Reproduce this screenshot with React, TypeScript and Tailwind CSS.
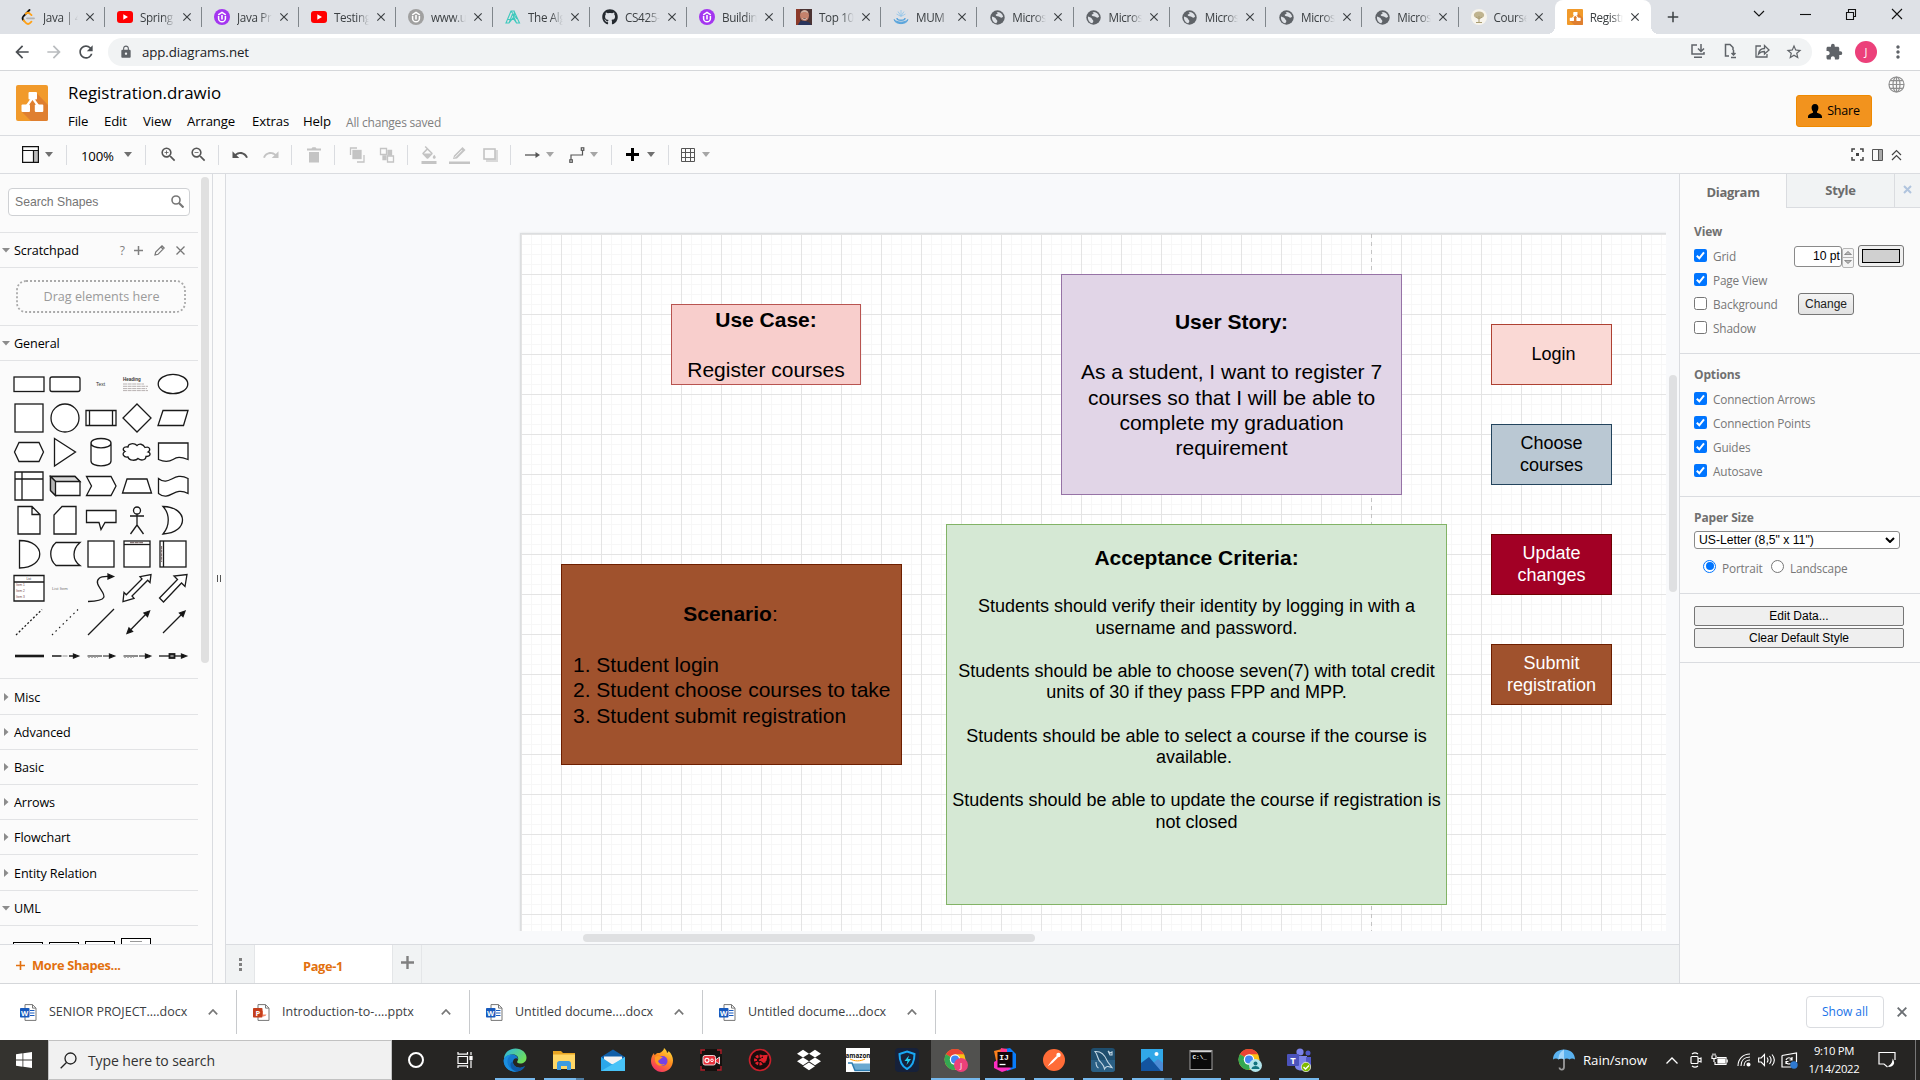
import React from "react";
import {
  MdArrowBack, MdArrowForward, MdRefresh, MdLock, MdClose, MdAdd, MdStarBorder, MdExtension,
  MdMoreVert, MdZoomIn, MdZoomOut, MdUndo, MdRedo, MdFormatColorFill,
} from "react-icons/md";
import { FaGithub, FaDropbox } from "react-icons/fa";

const UI = "font-['Open_Sans','Noto_Sans',sans-serif]";
const ARIAL = "font-['Liberation_Sans',Arial,sans-serif]";

/* ---------- favicons ---------- */

const YouTube = () => (
  <svg width="16" height="12" viewBox="0 0 16 12"><rect width="16" height="12" rx="3" fill="#f00" /><path d="M6.3 3.2v5.6L11 6z" fill="#fff" /></svg>
);
const Upwork = ({ c }: { c: string }) => (
  <svg width="16" height="16" viewBox="0 0 16 16"><circle cx="8" cy="8" r="8" fill={c} />
    <path d="M4.6 7v2.400a3.4 3.400 0 0 0 6.800 0V7M4.200 5.800L8 3.400l3.800 2.400" fill="none" stroke="#fff" strokeWidth="1.500" /><path d="M8 6v4.500" stroke="#fff" strokeWidth="1.600" /></svg>
);
const Leet = () => (
  <svg width="14" height="16" viewBox="0 0 14 16" fill="none" strokeLinecap="round" strokeWidth="1.800"><path d="M8.500 1L2.600 7c-1.300 1.400-1.300 3 0 4.300" stroke="#111" /><path d="M2.600 11.300l2.300 2.600c1.300 1.300 3 1.300 4.300 0l1.200-1.200M4.800 4.800c1.500-1.300 3-1.300 4.300 0l1.400 1.300" stroke="#ffa116" /><path d="M6 9.300h7" stroke="#b3b3b3" /></svg>
);
const Alpha = () => (
  <svg width="16" height="14" viewBox="0 0 16 14" fill="none" stroke="#3ec9bd" strokeWidth="1.100"><path d="M1 13L6 1h3l5.500 12h-3L7.500 4 4 13zM4 13l4-5 3.500 5M6 1l6 8M9 1l1 4M2.500 9.500h6" /></svg>
);
const Face = () => (
  <svg width="16" height="16" viewBox="0 0 16 16"><rect width="16" height="16" fill="#4c3434" /><rect width="4" height="16" fill="#8c3a2a" /><ellipse cx="8.500" cy="6.500" rx="4.500" ry="5.500" fill="#c4826c" /><path d="M4.500 4.500c1-4.500 7.500-4.500 8 0-2-2-6-2-8 0z" fill="#cdb5a8" /><path d="M2 16c1-4 4-5 7-4s5 1 6 4z" fill="#28345c" /><path d="M6.500 9.500c1 1 3 1 4 0" stroke="#fff" strokeWidth=".8" /></svg>
);
const Fountain = () => (
  <svg width="16" height="16" viewBox="0 0 16 16" fill="none" stroke="#5aa5dc" strokeWidth="1"><path d="M8 7V1M8 7L5 2.500M8 7l3-4.500M8 7.500L3.500 5M8 7.500L12.500 5" strokeWidth=".8" stroke="#8fc4ea" /><path d="M4 9c0 3 8 3 8 0" strokeWidth="1.500" /><path d="M1 10.500c1 5.500 13 5.500 14 0-3 3.500-11 3.500-14 0z" fill="#5aa5dc" /></svg>
);
const Tree = () => (
  <svg width="16" height="16" viewBox="0 0 16 16"><circle cx="8" cy="8" r="8" fill="#f7f4ec" /><ellipse cx="8" cy="6" rx="5.200" ry="3.600" fill="#c0b48f" /><path d="M8 7v6M5 8l3 2 3-2M5 13.500h6" stroke="#a99c72" fill="none" /></svg>
);
const DrawioMark = ({ w, h }: { w: number; h: number }) => (
  <svg width={w} height={h} viewBox="0 0 32 36" preserveAspectRatio="none">
    <rect width="32" height="36" rx="2" fill="#f19a2b" />
    <path d="M20.500 8L32 20v14a2 2 0 0 1-2 2H15L6 27l9-11z" fill="#df7f30" />
    <path d="M16.500 13L10 22M16.500 13L23 22" stroke="#fff" strokeWidth="2.200" />
    <rect x="12.500" y="7" width="8.500" height="7.500" rx="1" fill="#fff" /><rect x="5.500" y="19.500" width="8.500" height="7.500" rx="1" fill="#fff" /><rect x="18.800" y="19.500" width="8.500" height="7.500" rx="1" fill="#fff" />
  </svg>
);
const Globe = () => (
  <svg width="15" height="15" viewBox="0 0 15 15"><circle cx="7.500" cy="7.500" r="7.200" fill="#5f6368" /><path d="M2 6.500c2 .5 3.500 1 4 2.500.3 1 1.500 1 1.300 2.500-.1.900-.8 1.200-1.200 1.800C3.500 12.800 1.600 10 2 6.500zM6.500 2c2 1.200 1 2-.5 2.500-.8.300 0 1.500 1.500 1.700 2 .3 2.800 1.500 4 1.500.8 0 1-.7 1.600-1.200C12.500 4 10 1.800 6.500 2z" fill="#dee1e6" /></svg>
);

const tabs: { t: string; i: React.ReactNode }[] = [
  { t: "Java | 4", i: <Leet /> },
  { t: "Spring B", i: <YouTube /> },
  { t: "Java Pr", i: <Upwork c="#a435f0" /> },
  { t: "Testing", i: <YouTube /> },
  { t: "www.ud", i: <Upwork c="#a0a0a0" /> },
  { t: "The Alg", i: <Alpha /> },
  { t: "CS425-", i: <FaGithub className="size-4 text-[#24292f]" /> },
  { t: "Building", i: <Upwork c="#a435f0" /> },
  { t: "Top 10", i: <Face /> },
  { t: "MUM", i: <Fountain /> },
  { t: "Micros", i: <Globe /> },
  { t: "Micros", i: <Globe /> },
  { t: "Micros", i: <Globe /> },
  { t: "Micros", i: <Globe /> },
  { t: "Micros", i: <Globe /> },
  { t: "Course", i: <Tree /> },
  { t: "Registr", i: <DrawioMark w={16} h={16} /> },
];

function TabStrip() {
  return (
    <div className="flex h-[34px] bg-[#dee1e6] pl-2">
      {tabs.map((tab, n) => {
        const active = n === tabs.length - 1;
        const sep = n < tabs.length - 2;
        return (
          <div key={n} className={`relative flex h-[34px] items-center pl-[12px] ${n < 9 ? "w-[97px]" : "w-[96.25px]"} ${active ? "rounded-t-lg bg-white" : ""}`}>
            {active && <>
              <span className="absolute bottom-0 -left-2 size-2 bg-[radial-gradient(circle_at_0_0,#dee1e6_8px,#fff_8px)]" />
              <span className="absolute bottom-0 -right-2 size-2 bg-[radial-gradient(circle_at_100%_0,#dee1e6_8px,#fff_8px)]" />
            </>}
            <span className="flex w-4 shrink-0 items-center justify-center">{tab.i}</span>
            <span className={`ml-[7px] overflow-hidden text-[11.700px] leading-4 tracking-[-0.35px] whitespace-nowrap text-[#3c4043] [mask-image:linear-gradient(to_right,#000_65%,transparent)] ${n < 9 ? "w-[35px]" : "w-[33.500px]"}`}>{tab.t}</span>
            <MdClose className="ml-[5px] size-[14px] shrink-0 text-[#3c4043]" />
            {sep && <span className="absolute top-[7px] right-0 h-5 w-px bg-[#80868b]" />}
          </div>
        );
      })}
      <MdAdd className="mt-[8px] ml-[13px] size-[18px] text-[#3c4043]" />
      <div className="mt-[14px] ml-auto flex h-0 w-[184px] items-center">
        {["M2 4l5 5 5-5", "M2 7.500h11", "M2.500 5.500h7v7h-7zM4.500 5V2.500h7v7H10", "M2 2l10 10M12 2L2 12"].map((d) => (
          <span key={d} className="flex w-[46px] justify-center"><svg width="14" height="14" viewBox="0 0 14 14" fill="none" stroke="#111" strokeWidth="1.100"><path d={d} /></svg></span>
        ))}
      </div>
    </div>
  );
}

function AddressBar() {
  const cls = "size-4";
  return (
    <div className="flex h-9 items-center bg-white text-[#5f6368]">
      <MdArrowBack className="ml-3 size-[20px] text-[#4b4f53]" />
      <MdArrowForward className="ml-3 size-[20px] text-[#b9bcbf]" />
      <MdRefresh className="ml-3 size-[20px] text-[#4b4f53]" />
      <div className="ml-3 flex h-7 w-[1704px] items-center rounded-full bg-[#f1f3f4]">
        <MdLock className="ml-[11px] size-[14px]" />
        <span className="mt-px ml-[9px] text-[13.300px] tracking-[-0.1px] text-[#202124]">app.diagrams.net</span>
        <div className="mr-[10px] ml-auto flex gap-4">
          <svg className={cls} viewBox="0 0 16 16" fill="none" stroke="currentColor" strokeWidth="1.500"><path d="M7 2H2v9h12V9M4 14.300h8" /><path d="M11 1v7M8 5.500l3 3 3-3" /></svg>
          <svg className={cls} viewBox="0 0 16 16" fill="none" stroke="currentColor" strokeWidth="1.500"><path d="M7 13H3.500V1.500H8L11 4.500V7M11.500 7v5M9.500 10l2 2 2-2M9 14.500h5" /></svg>
          <svg className={cls} viewBox="0 0 16 16" fill="none" stroke="currentColor" strokeWidth="1.300"><path d="M7 3H2v11h11v-3M4.500 11c.5-4 3-5.500 6-5.500V2.500L15 7l-4.500 4V8.500c-2.500 0-4.500.5-6 2.500z" /></svg>
          <MdStarBorder className="-mx-px size-[18px]" />
        </div>
      </div>
      <MdExtension className="ml-[13px] size-[18px]" />
      <span className="ml-[12px] flex size-[22px] items-center justify-center rounded-full bg-[#ec407a] text-[11px] text-white">J</span>
      <MdMoreVert className="ml-[11px] size-[20px]" />
    </div>
  );
}

function Header() {
  return (
    <div className="flex h-[65px] border-b border-[#dadce0] bg-[#fbfbfb]">
      <div className="mt-[14px] ml-4"><DrawioMark w={32} h={36} /></div>
      <div className="ml-5 text-black">
        <div className="mt-[10px] text-[16.900px] leading-6">Registration.drawio</div>
        <div className="mt-[7px] flex h-5 items-center text-[13.200px] tracking-[-0.15px]">
          <span className="w-9">File</span><span className="w-[39px]">Edit</span><span className="w-[44px]">View</span>
          <span className="w-[65px]">Arrange</span><span className="w-[51px]">Extras</span><span className="w-[43px]">Help</span>
          <span className="mt-[2px] text-[12px] tracking-[-0.2px] text-[#808080]">All changes saved</span>
        </div>
      </div>
      <div className="mt-6 ml-auto flex h-8 w-[76px] items-center justify-center rounded-[3px] border border-[#ef8a00] bg-[#f2931e] text-[12.500px] font-medium text-black">
        <svg className="mr-[5px]" width="14" height="14" viewBox="0 0 14 14"><path d="M7 0c2.400 0 3.600 1.700 3.400 4-.2 1.800-.8 2.800-1.400 3.500v1.300c2.500 1 5 1.500 5 4V14H0v-1.200c0-2.500 2.500-3 5-4V7.500C4.400 6.800 3.800 5.800 3.600 4 3.400 1.700 4.600 0 7 0z" /></svg>
        <span className="mt-px tracking-[-0.2px]">Share</span>
      </div>
      <svg className="mt-[5px] mr-[15px] ml-4" width="17" height="17" viewBox="0 0 17 17" fill="none" stroke="#8f8f8f" strokeWidth="1.200"><circle cx="8.500" cy="8.500" r="7.500" /><ellipse cx="8.500" cy="8.500" rx="3.500" ry="7.500" /><path d="M8.500 1v15M1 8.500h15M2.300 4.700h12.400M2.300 12.300h12.400" /></svg>
    </div>
  );
}

const Caret = ({ m, light }: { m: string; light?: boolean }) => (
  <svg className={m} width="8" height="5" viewBox="0 0 8 5"><path d="M0 0h8L4 5z" fill={light ? "#a6a6a6" : "#707070"} /></svg>
);
const Sep = ({ m }: { m: string }) => <span className={`h-5 w-px bg-[#dadce0] ${m}`} />;

function Toolbar() {
  return (
    <div className="flex h-[38px] items-center border-b border-[#dadce0] bg-[#fbfbfb] text-[#555]">
      <svg className="ml-[22px]" width="17" height="17" viewBox="0 0 17 17" fill="none" stroke="#111" strokeWidth="1.200"><rect x="11.500" y="4" width="5" height="12.500" fill="#bbb" stroke="none" /><path d="M.6.6h15.800v15.800H.6zM.6 4.500h15.800M11.500 4.500v12" /></svg>
      <Caret m="ml-[6px]" /><Sep m="ml-[13px]" />
      <span className="mt-[5px] ml-[14px] w-[35px] text-[13.200px] tracking-[-0.2px] text-black">100%</span>
      <Caret m="ml-2" /><Sep m="ml-[13px]" />
      <MdZoomIn className="ml-[13px] size-[19px]" /><MdZoomOut className="ml-[11px] size-[19px]" />
      <Sep m="ml-[10px]" /><MdUndo className="ml-3 size-[18px]" /><MdRedo className="ml-[13px] size-[18px] text-[#c4c4c4]" />
      <Sep m="ml-[11px]" />
      <svg className="ml-[14px]" width="16" height="16" viewBox="0 0 16 16" fill="#c4c4c4"><path d="M1 1.500h4.500L6.500.3h3l1 1.200H15v2H1zM3 5h10v10.500H3z" /></svg>
      <Sep m="ml-3" />
      <svg className="ml-[14px]" width="16" height="16" viewBox="0 0 16 16" fill="none" stroke="#c4c4c4" strokeWidth="1.300"><rect x="4" y="3.500" width="8" height="8" fill="#c4c4c4" /><path d="M1.500 8V1H8M15 8v7H8" /></svg>
      <svg className="ml-[14px]" width="16" height="16" viewBox="0 0 16 16" fill="none" stroke="#c4c4c4" strokeWidth="1.300"><path d="M1.500 1.500h6v6h-6zM8.500 9h6v6h-6z" /><path d="M9 3.500h3.500V8H9zM4 9h3v3.500H4z" fill="#c4c4c4" /></svg>
      <Sep m="ml-3" /><MdFormatColorFill className="ml-3 size-[18px] text-[#c4c4c4]" />
      <svg className="ml-[11px]" width="21" height="18" viewBox="0 0 21 18" fill="#c4c4c4"><path d="M0 15.500h21V18H0zM4 13l1-3.500L13.500 1 16.500 4 8 12.500z" /><path d="M5.800 11.500L13 4.200" stroke="#fbfbfb" /></svg>
      <svg className="ml-[13px]" width="15" height="14" viewBox="0 0 15 14" fill="none"><path d="M3 11h12v3H3zM12 2h3v10h-3z" fill="#d9d9d9" /><rect x="1" y="1" width="11" height="10" stroke="#c4c4c4" strokeWidth="1.600" /></svg>
      <Sep m="ml-3" />
      <svg className="ml-[14px]" width="15" height="8" viewBox="0 0 15 8"><path d="M0 4h12" stroke="#555" strokeWidth="1.300" /><path d="M10.500 1l4.500 3-4.500 3z" fill="#555" /></svg>
      <Caret m="ml-[6px]" light />
      <svg className="ml-[15px]" width="16" height="16" viewBox="0 0 16 16" fill="none" stroke="#555" strokeWidth="1.200"><path d="M2 13V8h11.500V3" /><rect x=".8" y="12.800" width="2.500" height="2.500" fill="#fff" /><rect x="12.300" y=".8" width="2.500" height="2.500" fill="#fff" /></svg>
      <Caret m="ml-[5px]" light /><Sep m="ml-[13px]" />
      <svg className="ml-[14px]" width="13" height="13" viewBox="0 0 13 13"><path d="M6.500 0v13M0 6.500h13" stroke="#000" strokeWidth="3" /></svg>
      <Caret m="ml-2" /><Sep m="ml-[13px]" />
      <svg className="ml-3" width="14" height="14" viewBox="0 0 14 14" fill="none" stroke="#555" strokeWidth="1"><path d="M.5.500h13v13H.5zM4.500 0v14M9.500 0v14M0 4.500h14M0 9.500h14" /></svg>
      <Caret m="ml-[7px]" light />
      <div className="mr-[18px] ml-auto flex items-center gap-[8px]">
        <svg width="13" height="13" viewBox="0 0 13 13" fill="none" stroke="#444" strokeWidth="1.500"><path d="M1 4V1h3M9 1h3v3M12 9v3H9M4 12H1V9" /><rect x="5" y="5" width="3" height="3" fill="#444" stroke="none" /></svg>
        <svg width="11" height="12" viewBox="0 0 11 12" fill="none" stroke="#555"><rect x="7" y="1" width="3" height="10" fill="#aaa" stroke="none" /><path d="M.5.500h10v11H.5zM6.500 0v12" /></svg>
        <svg width="11" height="12" viewBox="0 0 11 12" fill="none" stroke="#444" strokeWidth="1.200"><path d="M1 6l4.500-4.500L10 6M1 11l4.500-4.500L10 11" /></svg>
      </div>
    </div>
  );
}

/* ---------- shape palette (each cell is 36x34) ---------- */

const T = ({ x, y, s, c = "#333", b, children }: { x: number; y: number; s: number; c?: string; b?: boolean; children: string }) => (
  <text x={x} y={y} fontSize={s} fill={c} stroke="none" fontWeight={b ? 700 : 400} fontFamily="Liberation Sans">{children}</text>
);

const shapes: React.ReactNode[] = [
  <rect x="3" y="10" width="30" height="14.500" />,
  <rect x="3" y="10" width="30" height="14.500" rx="2" />,
  <T x={13} y={19} s={5}>Text</T>,
  <g><T x={4} y={13.500} s={4.500} b>Heading</T><path d="M4 17h21M4 19.300h25M4 21.600h24M4 23.600h25" stroke="#8a8080" strokeWidth=".6" strokeDasharray="4 .6" /></g>,
  <ellipse cx="18" cy="17" rx="14.800" ry="9.700" />,
  <rect x="4" y="3" width="28" height="28" />,
  <circle cx="18" cy="17" r="14" />,
  <path d="M3 9.500h30v15H3zM6.500 9.500v15M29.500 9.500v15" />,
  <path d="M18 3l14 14-14 14L4 17z" />,
  <path d="M8 9.500h25L28.500 24.500H3z" />,
  <path d="M8 7.500h20l4.500 9.500-4.500 9.500H8L3.500 17z" />,
  <path d="M7.500 3.500L28.500 17 7.500 31z" />,
  <path d="M8 8v18c0 6.500 20 6.500 20 0V8c0-6-20-6-20 0 0 6.500 20 6.500 20 0" />,
  <path d="M9 12c-5-1-6 3-3 4.500-4 2-1 6.500 3 5.500 1 4 8 4 10 1.500 4 3 8 1 8-2 5 0 5-3.500 2-4.500 3-2 2-6-3-4.500-2-4-6-4-8-2-3-3-9-2-9 1.500z" />,
  <path d="M3.500 8H33v16.500c-8-3-11-2.500-15 0-5 3-10 2-14.500 0z" />,
  <path d="M4 3h28v28H4zM11 3v28M4 10h28" />,
  <g><path d="M3.500 7.500H28l5 5v14H8.500l-5-5z" /><path d="M3.500 7.500H28l5 5H8.500z" fill="#d8d8d8" /><path d="M3.500 7.500l5 5v14l-5-5z" fill="#b5b5b5" /></g>,
  <path d="M3.500 7.500H28l5 9.500-5 9.500H3.500L8.500 17z" />,
  <path d="M8 10h20l4.500 14h-29z" />,
  <path d="M3.500 9.500c11 9 15-8 29.500 0v15c-14-8-18 9-29.500 0z" />,
  <path d="M7 3.500h14l8 8v19.500H7zM21 3.500v8h8" />,
  <path d="M15 3.500h14V31H7V12z" />,
  <path d="M3.500 7.500H33v12H22l-4 7-2-7H3.500z" />,
  <g><circle cx="18" cy="7.500" r="3.500" /><path d="M18 11v11M11 13h14M18 22l-6.500 9M18 22l6.500 9" /></g>,
  <path d="M8 3.500C34 4 34 30 8 31c7-8 7-20 0-27.500z" />,
  <path d="M8.500 3.500c27 0 27 27 0 27.500z" />,
  <path d="M9 5.500h24c-8 7-8 17 0 23H9c-7-6-7-17 0-23z" />,
  <rect x="5" y="4" width="26" height="26" />,
  <g><rect x="5" y="4" width="26" height="26" /><path d="M5 7.500h26" /><path d="M11 5.600h13" stroke="#877" strokeDasharray="4 .6" /></g>,
  <g><rect x="5" y="4" width="26" height="26" /><path d="M8.500 4v26" /><path d="M6.500 9v16" stroke="#877" strokeDasharray="3 .6" /></g>,
  <g><path d="M3 4.500h30v25.500H3zM3 11h30" /><T x={15.500} y={9} s={3}>List</T><T x={5} y={14.800} s={3.200} c="#744">Item 1</T><T x={5} y={20.700} s={3.200} c="#744">Item 2</T><T x={5} y={26.700} s={3.200} c="#744">Item 3</T></g>,
  <T x={5} y={18.500} s={4.200} c="#777">List Item</T>,
  <g><path d="M5 30.500c34-1 2-15 11-23 3-3 8-2 13-2" fill="none" /><path d="M25 3l5.500 2.500L25 8z" fill="#111" /></g>,
  <path d="M32 3.500l-1 8-2.300-2.300L13 25l2 2.300-11 3.200 1-9 2.300 2.300L23 8l-2-2.300z" />,
  <path d="M32 3.500l-2 12-3.500-3.500L8.500 31l-4-4L22.500 8.500 19 5z" />,
  <path d="M5 30L31 4.500" strokeDasharray="2 2" />,
  <path d="M5 30L31 4.500" strokeDasharray="1.500 3.500" strokeWidth="1.100" />,
  <path d="M5 30L31 4" />,
  <g><path d="M9 27.500L28 8" /><path d="M30.500 6l-5.500 2 3.500 3.500zM8 28.500l2-5.500 3.500 3.500z" fill="#111" /></g>,
  <g><path d="M8 28L28 8" /><path d="M30 6l-5.500 2 3.500 3.500z" fill="#111" /></g>,
  <path d="M4 17h29" strokeWidth="2.600" />,
  <g><path d="M5 17h9.500M22 17h6" /><path d="M15.500 17h5" stroke="#aaa" /><path d="M26.500 15l5 2-5 2z" fill="#111" /></g>,
  <g><path d="M4.500 17H19M20 17h8" strokeWidth="1" /><path d="M5 18h10" stroke="#999" strokeWidth="1.500" strokeDasharray="2 1" /><path d="M26.500 15l5 2-5 2z" fill="#111" /></g>,
  <g><path d="M4.500 17H19M20 17h8" strokeWidth="1" /><path d="M5 18h10M26 18h6" stroke="#999" strokeWidth="1.500" strokeDasharray="2 1" /><path d="M26.500 15l5 2-5 2z" fill="#111" /></g>,
  <g><path d="M4 17h26" /><rect x="14.500" y="15" width="5" height="4" fill="#888" strokeWidth="1.800" /><path d="M26.500 15l5 2-5 2z" fill="#111" /></g>,
];

const Section = ({ t, open, h, icons }: { t: string; open?: boolean; h: string; icons?: boolean }) => (
  <div className={`flex items-center border-b border-[#e2e3e5] text-[12.600px] font-medium text-black ${h}`}>
    <span className="ml-[2px] flex w-3 justify-start">
      {open
        ? <svg width="8" height="5" viewBox="0 0 8 5"><path d="M0 0h8L4 4.500z" fill="#8c8c8c" /></svg>
        : <svg className="ml-[2px]" width="5" height="8" viewBox="0 0 5 8"><path d="M0 0v8l4.500-4z" fill="#8c8c8c" /></svg>}
    </span>
    <span className="mt-[3px] tracking-[-0.1px]">{t}</span>
    {icons && (
      <span className="mt-px mr-[13px] ml-auto flex items-center gap-[8px] text-[#808080]">
        <span className="mt-px mr-px text-[12px]">?</span>
        <svg width="9" height="9" viewBox="0 0 9 9"><path d="M4.500 0v9M0 4.500h9" stroke="#808080" strokeWidth="1.500" /></svg>
        <svg className="ml-[3px]" width="11" height="11" viewBox="0 0 11 11" fill="none" stroke="#777" strokeWidth="1.200"><path d="M1 10l.7-3L8 .8 10.200 3 4 9.300zM7 2l2 2" /></svg>
        <svg className="ml-[3px]" width="9" height="9" viewBox="0 0 9 9" stroke="#777" strokeWidth="1.300"><path d="M.5.500l8 8M8.500.500l-8 8" /></svg>
      </span>
    )}
  </div>
);

function Sidebar() {
  return (
    <div className="flex w-[213px] flex-col border-r border-[#dadce0] bg-[#fbfbfb]">
      <div className="flex h-[770px]">
        <div className="w-[198px] overflow-hidden">
          <div className="h-[59px] border-b border-[#e2e3e5] pt-[14px] pl-2">
            <div className="flex h-7 w-[182px] items-center justify-between rounded border border-[#cfd1d4] bg-white pr-[5px] pl-[6px]">
              <span className={`text-[12.200px] text-[#757575] ${ARIAL}`}>Search Shapes</span>
              <svg className="-mt-[2px]" width="13" height="13" viewBox="0 0 13 13" fill="none" stroke="#777"><circle cx="5" cy="5" r="4" strokeWidth="1.600" /><path d="M8 8l4.500 4.500" strokeWidth="2.200" /></svg>
            </div>
          </div>
          <Section t="Scratchpad" open h="h-[35px]" icons />
          <div className="h-[58px] border-b border-[#e2e3e5] pt-3 pl-4">
            <div className="relative flex h-[33px] w-[170px] items-center justify-center pt-[2px] pl-px text-[12.600px] text-[#9a9a9a]">
              <svg className="absolute inset-0" width="170" height="33" fill="none"><rect x="1" y="1" width="168" height="31" rx="9" stroke="#aaa" strokeWidth="1.800" strokeDasharray="2 2" /></svg>
              Drag elements here
            </div>
          </div>
          <Section t="General" open h="h-[35px]" />
          <div className="grid h-[318px] grid-cols-[repeat(5,36px)] content-start border-b border-[#e2e3e5] pt-[6px] pl-[10.500px]">
            {shapes.map((s, n) => (
              <svg key={n} width="36" height="34" viewBox="0 0 36 34" fill={n === 32 || (n > 34 && n < 40) ? "none" : "#fff"} stroke="#1a1a1a" strokeWidth="1.300">{s}</svg>
            ))}
          </div>
          <Section t="Misc" h="h-9" />
          <Section t="Advanced" h="h-[35px]" />
          <Section t="Basic" h="h-[35px]" />
          <Section t="Arrows" h="h-[35px]" />
          <Section t="Flowchart" h="h-[35px]" />
          <Section t="Entity Relation" h="h-9" />
          <Section t="UML" open h="h-[35px]" />
          <div className="flex items-start gap-[6px] pt-[12px] pl-[13px]">
            <span className="mt-[4px] h-6 w-[30px] border-[1.500px] border-black bg-white" />
            <span className="mt-[4px] h-6 w-[30px] border-[1.500px] border-black bg-white" />
            <span className="mt-[3px] h-6 w-[30px] border-[1.500px] border-black bg-white" />
            <span className="h-6 w-[30px] border-[1.500px] border-black bg-white px-[8px] pt-[2px]"><span className="block h-px bg-[#999]" /></span>
          </div>
        </div>
        <div className="mt-[3px] ml-[3px] h-[486px] w-2 rounded-full bg-[#e0e0e0]" />
      </div>
      <div className="flex h-[39px] items-center border-t border-[#dadce0] pt-[2px] pl-4 text-[12.800px] font-bold text-[#e2700f]">
        <svg width="9" height="9" viewBox="0 0 9 9"><path d="M4.500 0v9M0 4.500h9" stroke="#e2700f" strokeWidth="1.600" /></svg>
        <span className="mt-px ml-[7px] tracking-[-0.3px]">More Shapes...</span>
      </div>
    </div>
  );
}

/* ---------- canvas ---------- */

const Box = ({ pos, cls, children }: { pos: string; cls: string; children: React.ReactNode }) => (
  <div className={`absolute flex flex-col items-center justify-center border text-center ${pos} ${cls}`}>{children}</div>
);

function Canvas() {
  return (
    <div className="flex w-[1453px] flex-col bg-[#f8f9fb]">
      <div className="relative h-[770px] overflow-hidden">
        <div className={`absolute top-0 left-0 h-[757px] w-[1440px] overflow-hidden ${ARIAL}`}>
          <div className="absolute top-[59px] left-[294px] h-[900px] w-[1300px] border border-[#dcdee0] bg-white shadow-[0_0_2px_#e0e0e0] bg-[linear-gradient(to_right,#e4e4e4_1px,transparent_1px),linear-gradient(to_bottom,#e4e4e4_1px,transparent_1px),linear-gradient(to_right,#f7f7f7_1px,transparent_1px),linear-gradient(to_bottom,#f7f7f7_1px,transparent_1px)] bg-[length:40px_40px,40px_40px,10px_10px,10px_10px]" />
          <div className="absolute top-[60px] left-[1145px] h-[700px] w-px bg-[repeating-linear-gradient(to_bottom,#c4c4c4_0_4px,transparent_4px_8px)]" />
          <Box pos="top-[130px] left-[445px] w-[190px] h-[81px]" cls="border-[#b85450] bg-[#f8cecc] text-[21px] leading-[25px] text-black">
            <b>Use Case:</b><br /><span>Register courses</span>
          </Box>
          <Box pos="top-[100px] left-[835px] w-[341px] h-[221px]" cls="border-[#9673a6] bg-[#e1d5e7] text-[21px] leading-[25.200px] text-black">
            <b>User Story:</b><br /><span className="w-[320px]">As a student, I want to register 7<br />courses so that I will be able to<br />complete my graduation<br />requirement</span>
          </Box>
          <Box pos="top-[390px] left-[335px] w-[341px] h-[201px]" cls="border-[#6d1f00] bg-[#a0522d] text-[21px] leading-[25.400px] text-black">
            <span className="-ml-[2px]"><b>Scenario</b>:</span><br />
            <ol className="self-start pl-[11px] text-left whitespace-nowrap"><li>1. Student login</li><li>2. Student choose courses to take</li><li>3. Student submit registration</li></ol>
          </Box>
          <div className="absolute top-[350px] left-[720px] h-[381px] w-[501px] border border-[#82b366] bg-[#d5e8d4] pt-[20px] text-center text-[18px] leading-[21.600px] whitespace-nowrap text-black">
            <p className="mb-[26px] text-[21px] leading-[25px] font-bold">Acceptance Criteria:</p>
            <p className="mb-[21.600px]">Students should verify their identity by logging in with a<br />username and password.</p>
            <p className="mb-[21.600px]">Students should be able to choose seven(7) with total credit<br />units of 30 if they pass FPP and MPP.</p>
            <p className="mb-[21.600px]">Students should be able to select a course if the course is<br />available.&nbsp;</p>
            <p>Students should be able to update the course if registration is<br />not closed</p>
          </div>
          <Box pos="top-[150px] left-[1265px] w-[121px] h-[61px]" cls="border-[#ae4132] bg-[#fad9d5] pl-[4px] text-[18px] leading-[21.600px] text-black">Login</Box>
          <Box pos="top-[250px] left-[1265px] w-[121px] h-[61px]" cls="border-[#23445d] bg-[#bac8d3] text-[18px] leading-[21.600px] text-black"><span>Choose<br />courses</span></Box>
          <Box pos="top-[360px] left-[1265px] w-[121px] h-[61px]" cls="border-[#6f0000] bg-[#a20025] text-[18px] leading-[21.600px] text-white"><span>Update<br />changes</span></Box>
          <Box pos="top-[470px] left-[1265px] w-[121px] h-[61px]" cls="border-[#6d1f00] bg-[#a0522d] text-[18px] leading-[21.600px] text-white"><span>Submit<br />registration</span></Box>
        </div>
        <div className="absolute top-[760px] left-[357px] h-2 w-[452px] rounded-full bg-[#dfe0e2]" />
        <div className="absolute top-[201px] left-[1443px] h-[217px] w-2 rounded-full bg-[#dfe0e2]" />
      </div>
      <div className="flex h-[39px] border-t border-[#dadce0] bg-[#f1f3f4]">
        <div className="flex w-[29px] flex-col items-center justify-center gap-[2px] border-r border-[#e4e6e8]">
          <i className="size-[3px] bg-[#808080]" /><i className="size-[3px] bg-[#808080]" /><i className="size-[3px] bg-[#808080]" />
        </div>
        <div className="flex w-[138px] items-center justify-center border-r border-[#e4e6e8] bg-white pt-[5px] pr-px text-[12.800px] font-bold tracking-[-0.3px] text-[#e2700f]">Page-1</div>
        <div className="flex w-[29px] items-center justify-center border-r border-[#e4e6e8] pb-1"><svg width="13" height="13" viewBox="0 0 13 13"><path d="M6.500 0v13M0 6.500h13" stroke="#808080" strokeWidth="2.400" /></svg></div>
      </div>
    </div>
  );
}

/* ---------- format panel ---------- */

const Check = ({ on, t }: { on?: boolean; t: string }) => (
  <div className="flex h-6 items-center text-[11.800px] text-[#777]">
    {on
      ? <svg className="-mt-px shrink-0" width="13" height="13" viewBox="0 0 13 13"><rect width="13" height="13" rx="2" fill="#0075ff" /><path d="M2.800 6.800l2.500 2.500 4.700-6" stroke="#fff" strokeWidth="2" fill="none" /></svg>
      : <span className="-mt-px size-[13px] shrink-0 rounded-[2.500px] border border-[#767676] bg-white" />}
    <span className="mt-[2px] ml-[6px] tracking-[-0.15px] whitespace-nowrap">{t}</span>
  </div>
);
const Title = ({ children }: { children: string }) => <div className="h-6 text-[12px] leading-6 font-bold tracking-[-0.15px] text-[#707070]">{children}</div>;

function FormatPanel() {
  return (
    <div className="flex grow flex-col border-l border-[#dadce0] bg-[#fbfbfb]">
      <div className="flex h-[34px] text-[13px] font-bold tracking-[-0.3px] text-[#6c6c6c]">
        <div className="flex w-[106px] items-center justify-center pt-[3px]">Diagram</div>
        <div className="flex w-[108px] items-center justify-center border-b border-l border-[#dadce0] bg-[#f1f3f4]">Style</div>
        <div className="flex grow border-b border-l border-[#dadce0] bg-[#f1f3f4] pt-[11px] pl-2"><svg width="9" height="9" viewBox="0 0 9 9"><path d="M1 1l7 7M8 1L1 8" stroke="#b0c4de" strokeWidth="2" /></svg></div>
      </div>
      <div className="h-[146px] border-b border-[#dadce0] pt-[12px] pl-[14px]">
        <Title>View</Title>
        <div className="flex items-center">
          <div className="w-[100px]"><Check on t="Grid" /></div>
          <div className={`mt-px flex h-[21px] w-12 items-center justify-end rounded-[3px] border border-[#8a8a8a] bg-white pr-px text-[12.200px] text-black ${ARIAL}`}>10 pt</div>
          <div className="mt-[3px] flex h-[20px] w-3 flex-col rounded-[2px] border border-[#b5b5b5] bg-[#f4f4f4]">
            <span className="flex grow items-center justify-center border-b border-[#b5b5b5]"><svg width="8" height="4" viewBox="0 0 8 4"><path d="M.5 3.700L4 .500l3.500 3.200z" fill="#bbb" stroke="#666" strokeWidth=".7" /></svg></span>
            <span className="flex grow items-center justify-center"><svg width="8" height="4" viewBox="0 0 8 4"><path d="M.5.300L4 3.500 7.500.300z" fill="#bbb" stroke="#666" strokeWidth=".7" /></svg></span>
          </div>
          <div className="ml-1 h-[22px] w-[46px] rounded-[3px] border border-[#767676] bg-[#efefef] p-[3px]"><div className="h-full border border-black bg-[#d0d0d0]" /></div>
        </div>
        <Check on t="Page View" />
        <div className="flex items-center">
          <div className="w-[104px]"><Check t="Background" /></div>
          <div className={`flex h-[22px] w-[56px] items-center justify-center rounded-[3px] border border-[#767676] bg-gradient-to-b from-[#f4f4f4] to-[#e2e2e2] text-[12px] text-[#222] ${ARIAL}`}>Change</div>
        </div>
        <Check t="Shadow" />
      </div>
      <div className="h-[143px] border-b border-[#dadce0] pt-[9px] pl-[14px]">
        <Title>Options</Title>
        <Check on t="Connection Arrows" /><Check on t="Connection Points" /><Check on t="Guides" /><Check on t="Autosave" />
      </div>
      <div className="h-[97px] border-b border-[#dadce0] pt-[9px] pl-[14px]">
        <Title>Paper Size</Title>
        <div className={`mt-px flex h-[18px] w-[206px] items-center justify-between rounded-[3px] border border-[#8a8a8a] bg-white pr-[4px] pl-1 text-[12.200px] text-black ${ARIAL}`}>
          <span>US-Letter (8,5" x 11")</span>
          <svg width="10" height="6" viewBox="0 0 10 6"><path d="M1 1l4 4 4-4" fill="none" stroke="#000" strokeWidth="2" /></svg>
        </div>
        <div className="mt-[11px] flex items-center pl-[9px] text-[11.800px] tracking-[-0.15px] text-[#777]">
          <span className="-mt-[5px] flex size-[13px] items-center justify-center rounded-full border border-[#0075ff] bg-white"><i className="size-[8px] rounded-full bg-[#0075ff]" /></span>
          <span className="ml-[6px] w-[49px]">Portrait</span>
          <span className="-mt-[5px] size-[13px] rounded-full border border-[#767676] bg-white" />
          <span className="ml-[6px]">Landscape</span>
        </div>
      </div>
      <div className={`flex h-[69px] flex-col gap-[2px] border-b border-[#dadce0] pt-3 pl-[14px] text-[12px] text-black ${ARIAL}`}>
        <div className="flex h-5 w-[210px] items-center justify-center rounded-[2px] border border-[#767676] bg-[#efefef]">Edit Data...</div>
        <div className="flex h-5 w-[210px] items-center justify-center rounded-[2px] border border-[#767676] bg-[#efefef]">Clear Default Style</div>
      </div>
    </div>
  );
}

/* ---------- downloads ---------- */

const Doc = ({ c, l }: { c: string; l: string }) => (
  <svg width="17" height="17" viewBox="0 0 17 17"><path d="M5 .6h7.500l3.500 3.500v12.300H5z" fill="#fff" stroke="#777" /><path d="M12.500.6v3.500H16" fill="none" stroke="#777" />
    {l === "P" ? <path d="M10 6.500a3 3 0 1 0 3.500 4H10z" fill="#f08a6c" /> : <path d="M10 6.500h4.500M10 9h4.500M10 11.500h4.500" stroke={c} />}
    <rect y="4" width="9.500" height="9.500" rx=".8" fill={c} />
    <text x="4.750" y="11.500" fontSize="7.500" fontWeight="700" textAnchor="middle" fill="#fff" fontFamily="Open Sans">{l}</text></svg>
);

function Downloads() {
  const files = [["W", "SENIOR PROJECT....docx"], ["P", "Introduction-to-....pptx"], ["W", "Untitled docume....docx"], ["W", "Untitled docume....docx"]];
  return (
    <div className="flex h-[57px] items-center border-t border-[#d5d7da] bg-white pl-[4px]">
      {files.map(([k, name], n) => (
        <div key={n} className="flex h-11 w-[233px] items-center border-r border-[#c8cacd] pl-[16px]">
          <Doc c={k === "W" ? "#185abd" : "#c43e1c"} l={k} />
          <span className="mt-px ml-[12px] w-[154px] text-[12.500px] whitespace-nowrap text-[#3c4043]">{name}</span>
          <svg className="ml-[5px]" width="10" height="6" viewBox="0 0 10 6"><path d="M.8 5.300L5 1l4.200 4.300" fill="none" stroke="#777" strokeWidth="1.700" /></svg>
        </div>
      ))}
      <div className="ml-auto flex h-8 w-[78px] items-center justify-center rounded border border-[#dadce0] text-[12px] tracking-[-0.05px] text-[#1a73e8]">Show all</div>
      <svg className="mr-[13px] ml-[13px]" width="10" height="10" viewBox="0 0 10 10"><path d="M.7.700l8.600 8.600M9.300.700L.7 9.300" stroke="#6b6f73" strokeWidth="1.900" /></svg>
    </div>
  );
}

/* ---------- taskbar ---------- */

const S = ({ children }: { children: React.ReactNode }) => <svg width="24" height="24" viewBox="0 0 24 24">{children}</svg>;

const Chrome = ({ badge }: { badge: React.ReactNode }) => (
  <S>
    <circle cx="11" cy="11.500" r="10.500" fill="#fbc116" />
    <path d="M11 11.500L1.900 6.250A10.500 10.500 0 0 1 20.100 6.250H11z" fill="#ea4335" />
    <path d="M11 11.500L1.900 6.250A10.500 10.500 0 0 0 11 22l4.500-8z" fill="#34a853" />
    <circle cx="11" cy="11.500" r="5.200" fill="#fff" /><circle cx="11" cy="11.500" r="4" fill="#4285f4" />
    {badge}
  </S>
);

const apps: { i: React.ReactNode; run?: boolean; multi?: boolean; active?: boolean }[] = [
  { run: true, i: <S><defs><linearGradient id="e1" x1="0" y1="0" x2="1" y2=".6"><stop offset="0" stopColor="#2bb3e6" /><stop offset="1" stopColor="#6fe05a" /></linearGradient></defs><path d="M1 11C1 5 6 .5 12.500.5 19 .5 23.500 5 23.500 9.500c0 4-3 6-6.500 6-2.500 0-3.500-1-2.500-2.500 2-3.500-.5-6.500-4.500-6.500-4 0-7.500 2-9 4.500z" fill="url(#e1)" /><path d="M.7 12.500C1 8.500 5 6.500 9 6.500c3.500 0 6 2 6 5-1-2-4.500-1.500-5 2-.5 4 4 7 8.500 6 1.500-.3 2.800-1 3.500-1.500-1.500 3.500-5.500 5.700-9.500 5.700C6 23.700.7 19 .7 12.500z" fill="#1379cf" /><path d="M9 6.500c-4 2-5.500 6-4 10 1.500 4 5 6.500 9 7-7 1-13.500-4-13.300-11C1 8.500 5 6.500 9 6.500z" fill="#1b8fe0" /><path d="M10 13.500c-.5 4 4 7 8.500 6 1.500-.3 2.800-1 3.500-1.500-1.500 3-4.500 5-8 5.500-4-.5-7-4-6.500-7.500.2-1.200 1-2 2.500-2.500z" fill="#0f5aa8" /></S> },
  { run: true, multi: true, i: <S><path d="M1 3h8l2 2h12v16H1z" fill="#e8a523" /><path d="M1 6.500h22V21H1z" fill="#ffd766" /><path d="M5 22v-6.500c0-1.500 1-2.500 2.500-2.500h9c1.500 0 2.500 1 2.500 2.500V22h-4v-4H9v4z" fill="#3d9be0" /></S> },
  { i: <S><path d="M0 9l12-7.500L24 9v14H0z" fill="#0f5ea8" /><path d="M3 8.500h18v8H3z" fill="#f3f3f3" /><path d="M0 9l12 8 12-8v14H0z" fill="#2ba7ea" /><path d="M24 9L0 23h24z" fill="#48c3f7" /></S> },
  { i: <S><defs><linearGradient id="f1" x1=".8" y1="0" x2=".2" y2="1"><stop offset="0" stopColor="#ffe03b" /><stop offset=".45" stopColor="#ff8a1e" /><stop offset="1" stopColor="#f4296c" /></linearGradient></defs><path d="M14 0c2 1.500 3 3.500 3 5 1-.5 1.500-1.500 1.500-2 3 2.500 4.500 6 4.500 9.500C23 19 18 24 12 24S1 19 1 13c0-3 1-6 3-8 0 1 .3 1.700.8 2.300C6 5 8 4.700 9.500 5c2-1 4.500-2.500 4.500-5z" fill="url(#f1)" /><circle cx="12.500" cy="13" r="5" fill="#7542e5" /><path d="M5 9c3-2 6-1 8 1-3 0-3 2-5 3 1 3 4 4 7 3-3 3-9 2-10-3z" fill="#ff9b22" /></S> },
  { i: <S><rect x="1" y="1" width="22" height="22" rx="3" fill="#15110f" /><path d="M2 6V2h4M18 2h4v4M22 18v4h-4M6 22H2v-4" fill="none" stroke="#b5202c" strokeWidth="1.400" /><rect x="4" y="7.500" width="12.500" height="9.500" rx="2" fill="#e8323c" stroke="#fff" strokeWidth=".8" /><path d="M16.500 12l4-3v7l-4-2.500z" fill="#e8323c" stroke="#fff" strokeWidth=".8" /><circle cx="8" cy="12.300" r="2" fill="none" stroke="#fff" strokeWidth="1.200" /><circle cx="13" cy="12.300" r="1.300" fill="none" stroke="#fff" /></S> },
  { i: <S><circle cx="12" cy="12" r="10.500" fill="#190c0c" stroke="#c9202b" strokeWidth="1.600" /><circle cx="11.500" cy="12" r="4" fill="none" stroke="#e3202b" strokeWidth="3" strokeDasharray="2.500 1.200" /><path d="M11 12.500l6-4v6M15 8l4-.500-1 4z" stroke="#e3202b" strokeWidth="1.300" fill="#e3202b" /></S> },
  { i: <FaDropbox className="size-6 text-white" /> },
  { i: <S><rect width="24" height="24" fill="#fff" /><text x="12" y="9.500" fontSize="6.300" fontWeight="700" textAnchor="middle" fill="#111" fontFamily="Open Sans">amazon</text><path d="M4 11c5 2.500 10 2.500 15 0" stroke="#f90" fill="none" /><path d="M6.500 15.500H24V22H9z" fill="#6aa9d0" /><path d="M2 15h4l3 7.500h15" fill="none" stroke="#2d7cb0" strokeWidth="1.500" /></S> },
  { i: <S><rect x="0" y="0" width="24" height="24" rx="4" fill="#16213a" /><path d="M12 3.500l7.500 2.500c0 7-1.500 12-7.500 15C6 18 4.500 13 4.500 6z" fill="none" stroke="#19a8f5" strokeWidth="2" /><path d="M14 7.500l-4.500 5.500h3l-1 4 4.500-6h-3z" fill="#22d0ee" /></S> },
  { run: true, active: true, i: <Chrome badge={<><circle cx="17" cy="17" r="7" fill="#ec407a" /><text x="17" y="20" fontSize="8" textAnchor="middle" fill="#fff" fontFamily="Open Sans">J</text></>} /> },
  { run: true, i: <S><path d="M1 3l8-2 4 10-9 6z" fill="#fc801d" /><path d="M11 1l6-1 6 6v14l-9 3z" fill="#087cfa" /><path d="M1 14l8-5 9 12-9 3-8-4z" fill="#fe2dc2" /><path d="M8 0l6 1v6l-8 2z" fill="#fe3a8b" /><rect x="4.500" y="4" width="15" height="15.500" fill="#120608" /><text x="6.200" y="12" fontSize="8" fontWeight="700" fill="#fff" fontFamily="Liberation Mono">IJ</text><path d="M6.500 16.500h6" stroke="#fff" strokeWidth="1.300" /></S> },
  { run: true, i: <S><circle cx="12" cy="12" r="11" fill="#ff6c37" /><path d="M5.500 18.500l4-5.500 5-5 1.500 1.500-5 5z" fill="#fff" /><circle cx="16.500" cy="7" r="2.200" fill="#fff" /></S> },
  { run: true, i: <S><rect x="0" y="0" width="24" height="24" rx="3" fill="#1f4e6e" /><path d="M0 12h24v9a3 3 0 0 1-3 3H3a3 3 0 0 1-3-3z" fill="#2a5f84" /><path d="M4 3.500c6-.5 10 4 12 9 1 2.500 3 4 5 7l-4-1c-2-.5-2.500 1-3.500 2.500-.5-4-2.500-5-4-7C6.500 12 7 7 4 3.500zM5 14c0 3 .5 5 2.500 6M17 3l2 2 2-1v3h-2l-2-4" fill="none" stroke="#c3d7e4" strokeWidth="1.100" /></S> },
  { run: true, multi: true, i: <S><rect x="1" y="1" width="22" height="22" fill="#31a8e8" /><path d="M23 23V15l-5-4-6 5 3 7z" fill="#4b8bd6" /><path d="M1 23v-8l8-6 12 14z" fill="#1354a0" /><circle cx="16.500" cy="6" r="2" fill="#fff" /></S> },
  { run: true, i: <S><rect x="1" y="2.500" width="22" height="19" fill="#0a0a0a" stroke="#a0a0a0" /><path d="M1.500 3.500h21" stroke="#d5d5d5" strokeWidth="1.500" /><text x="3.500" y="11" fontSize="6" fill="#fff" fontFamily="Liberation Mono" fontWeight="700">C:\_</text></S> },
  { run: true, i: <Chrome badge={<><circle cx="17.500" cy="17.500" r="6.500" fill="#b3e5ec" /><circle cx="17.500" cy="15.500" r="2" fill="#12737f" /><path d="M13.500 21c0-4 8-4 8 0z" fill="#12737f" /></>} /> },
  { run: true, i: <S><circle cx="13" cy="4" r="3.600" fill="#7b83eb" /><circle cx="21" cy="5" r="2.500" fill="#5059c9" /><path d="M8 8h12v10c0 6-12 6-12 0z" fill="#7b83eb" /><path d="M19 9h5v8c-1 2-3 2-5 1z" fill="#5059c9" /><rect x="0" y="6" width="12" height="12" rx="1" fill="#4b53bc" /><text x="6" y="15.500" fontSize="9.500" fontWeight="700" textAnchor="middle" fill="#fff" fontFamily="Open Sans">T</text><circle cx="19" cy="19" r="4.700" fill="#7fba00" stroke="#eee" strokeWidth=".8" /><path d="M16.500 19l2 2 3.500-3.500" stroke="#fff" fill="none" strokeWidth="1.300" /></S> },
];

function Taskbar() {
  return (
    <div className="flex h-10 bg-[#262523] text-white">
      <div className="flex w-12 items-center justify-center bg-[#34332f]">
        <svg width="16" height="16" viewBox="0 0 16 16" fill="#fff"><path d="M0 2.200l6.500-.9v6.300H0zM7.300 1.200L16 0v7.600H7.300zM0 8.400h6.500v6.300L0 13.800zM7.300 8.400H16V16l-8.700-1.200z" /></svg>
      </div>
      <div className="flex w-[344px] items-center border border-[#c2c2c2] bg-[#f1f1f1] text-[#333]">
        <svg className="ml-[11px]" width="17" height="17" viewBox="0 0 17 17" fill="none" stroke="#222" strokeWidth="1.300"><circle cx="10.500" cy="6.500" r="5.500" /><path d="M6.500 10.500L.7 16.300" /></svg>
        <span className="mt-px ml-[11px] text-[14px] tracking-[-0.1px]">Type here to search</span>
      </div>
      <div className="flex w-[48px] items-center justify-center"><span className="size-[16px] rounded-full border-2 border-white" /></div>
      <div className="flex w-[49px] items-center justify-center">
        <svg width="16" height="16" viewBox="0 0 16 16" fill="none" stroke="#fff" strokeWidth="1.200"><path d="M1 4.500h9.500v7H1zM1 0v2.200h9.500V0M1 16v-2.200h9.500V16M14 0v3M14 8.500V16" /><rect x="13" y="4.500" width="2" height="3" fill="#fff" /></svg>
      </div>
      <div className="flex pl-px">
        {apps.map((a, n) => (
          <div key={n} className={`flex h-10 w-[49.050px] flex-col items-center ${a.active ? "bg-[#51514f]" : ""}`}>
            <div className="flex h-[38px] items-center pt-[2px]">{a.i}</div>
            {a.run && <div className={`flex h-[2px] ${a.active ? "w-full" : "w-10"}`}><span className="grow bg-[#76b9ed]" />{a.multi && <span className="w-[8px] bg-[#4f7ea3]" />}</div>}
          </div>
        ))}
      </div>
      <div className="ml-auto flex items-center">
        <svg width="22" height="24" viewBox="0 0 22 24"><path d="M11 2v17c0 3.500-4.500 3.500-4.500.5" fill="none" stroke="#9b9b9b" strokeWidth="1.800" /><path d="M0 11.500C0 5 5 1.500 11 1.500S22 5 22 11.500c-2-1.500-4-1.500-5.500 0-1.500-1.500-4-1.500-5.500 0-1.500-1.500-4-1.500-5.500 0-1.500-1.500-3.500-1.500-5.500 0z" fill="#5ab2ef" /><path d="M11 1.500C7 4 5.500 7 5.500 11.500c1.500-1.500 4-1.500 5.500 0z" fill="#a2d6fa" /></svg>
        <span className="mt-[2px] ml-[8px] w-[67px] text-[13.300px] tracking-[-0.1px]">Rain/snow</span>
        <svg className="ml-[16px]" width="12" height="7" viewBox="0 0 12 7" fill="none" stroke="#fff" strokeWidth="1.300"><path d="M.5 6.500L6 1l5.500 5.500" /></svg>
        <svg className="ml-[12px]" width="12" height="16" viewBox="0 0 12 16" fill="none" stroke="#fff" strokeWidth="1.200"><rect x="1" y="4.500" width="7" height="7" rx="1" /><path d="M8 7l3-1v4L8 9M2 2c2-1.500 4-1.500 6 0M2 14c2 1.500 4 1.500 6 0" /></svg>
        <svg className="ml-[9px]" width="17" height="14" viewBox="0 0 17 14" fill="none" stroke="#fff" strokeWidth="1.200"><path d="M6 4.500h9v7H4V9" /><rect x="7" y="6" width="6.500" height="4" fill="#fff" /><path d="M16.200 6.500v3M1 2.500v3h4v-3M2 .5v2M4 .5v2M3 5.500V9" /></svg>
        <svg className="ml-[9px]" width="14" height="14" viewBox="0 0 14 14" fill="none" stroke="#fff" strokeWidth="1.100"><path d="M1 13C1 6 6 1 13 1M4 13c0-5.500 3.500-9 9-9M7 13c0-3.500 2.500-6 6-6" /><circle cx="11.500" cy="11.500" r="1.500" fill="#fff" /></svg>
        <svg className="ml-[7px]" width="17" height="14" viewBox="0 0 17 14" fill="none" stroke="#fff" strokeWidth="1.100"><path d="M.6 5h2.600l3.300-3.500v11L3.200 9H.6zM9 4.500c1.200 1.500 1.200 3.500 0 5M11.500 3c2 2.500 2 5.500 0 8M14 1.500c3 3.500 3 7.500 0 11" /></svg>
        <svg className="ml-[6px]" width="17" height="17" viewBox="0 0 17 17" fill="none" stroke="#fff" strokeWidth="1.200"><path d="M1 3.500L15.500 1v9M1 3.500V15h9M5 8c1-3 5-3 6 0M11 5v3H8.500M5 12V9.500h2.500M5 10c1 2 3 2.500 4.500 1.500" /><circle cx="13" cy="13" r="3.700" fill="#2f7ad1" stroke="none" /></svg>
        <div className="ml-[6px] flex w-[60px] flex-col items-center text-[11.300px] leading-[18px] tracking-[-0.3px]"><span>9:10 PM</span><span>1/14/2022</span></div>
        <svg className="ml-[14px]" width="18" height="18" viewBox="0 0 18 18" fill="none" stroke="#fff" strokeWidth="1.200"><path d="M17 9V1.500H1V13h5l3.500 3" /><path d="M15 9.500c1.500 3-.5 6-4.500 6 2-1 4-3 4.500-6z" fill="#fff" /></svg>
        <span className="mr-1 ml-[19px] h-10 w-px bg-[#777]" />
      </div>
    </div>
  );
}

export default function App() {
  return (
    <div className={`flex h-[1080px] w-[1920px] flex-col overflow-hidden bg-white ${UI}`}>
      <TabStrip />
      <AddressBar />
      <div className="h-px bg-[#d5d7da]" />
      <Header />
      <Toolbar />
      <div className="flex h-[809px]">
        <Sidebar />
        <div className="flex w-[13px] items-center justify-center gap-[2px] border-r border-[#dadce0] bg-[#fbfbfb]">
          <i className="h-[7px] w-px bg-[#555]" /><i className="h-[7px] w-px bg-[#555]" />
        </div>
        <Canvas />
        <FormatPanel />
      </div>
      <Downloads />
      <Taskbar />
    </div>
  );
}
